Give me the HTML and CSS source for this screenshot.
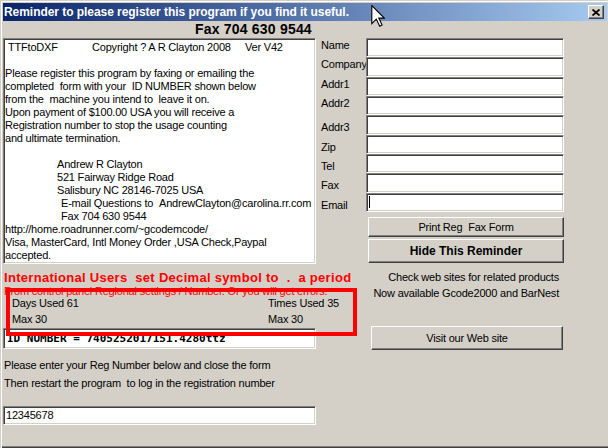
FILE: index.html
```html
<!DOCTYPE html>
<html>
<head>
<meta charset="utf-8">
<link rel="stylesheet" href="styles.css">
</head>
<body>
<div class="window">
  <div class="titlebar">
    <span class="title">Reminder to please register this program if you find it useful.</span>
    <span class="close"><svg width="8" height="7" viewBox="0 0 8 7"><path d="M0.5 0.5 L7.5 6.5 M7.5 0.5 L0.5 6.5" stroke="#000" stroke-width="1.8" fill="none"/></svg></span>
  </div>
  <div class="content">
    <div class="faxline">Fax 704 630 9544</div>
    <div class="main">
      <div class="left">
        <div class="memo">
          <div class="line"><span class="c1">TTFtoDXF</span><span class="c2">Copyright ? A R Clayton 2008</span><span>Ver V42</span></div>
          <div class="line"> </div>
          <div class="line">Please register this program by faxing or emailing the</div>
          <div class="line">completed  form with your  ID NUMBER shown below</div>
          <div class="line">from the  machine you intend to  leave it on.</div>
          <div class="line">Upon payment of $100.00 USA you will receive a</div>
          <div class="line">Registration number to stop the usage counting</div>
          <div class="line">and ultimate termination.</div>
          <div class="line"> </div>
          <div class="line ind1">Andrew R Clayton</div>
          <div class="line ind1">521 Fairway Ridge Road</div>
          <div class="line ind1">Salisbury NC 28146-7025 USA</div>
          <div class="line ind2"><span class="c3">E-mail Questions to</span>AndrewClayton@carolina.rr.com</div>
          <div class="line ind2">Fax 704 630 9544</div>
          <div class="line">http://home.roadrunner.com/~gcodemcode/</div>
          <div class="line">Visa, MasterCard, Intl Money Order ,USA Check,Paypal</div>
          <div class="line">accepted.</div>
        </div>
        <div class="warn">International Users  set Decimal symbol to  .  a period</div>
        <div class="warn-sub">From control panel Regional settings / Number. Or you will get errors.</div>
        <div class="stats">
          <span>Days Used 61</span><span>Times Used 35</span>
          <span>Max 30</span><span>Max 30</span>
        </div>
        <div class="idbox">ID NUMBER = 7405252017151.4280ttz</div>
        <p class="note">Please enter your Reg Number below and close the form</p>
        <p class="note">Then restart the program  to log in the registration number</p>
        <div class="field reg">12345678</div>
      </div>
      <div class="right">
        <div class="form">
          <span class="lbl">Name</span><span class="field"></span>
          <span class="lbl">Company</span><span class="field"></span>
          <span class="lbl">Addr1</span><span class="field"></span>
          <span class="lbl">Addr2</span><span class="field"></span>
          <span class="lbl low">Addr3</span><span class="field"></span>
          <span class="lbl low">Zip</span><span class="field"></span>
          <span class="lbl low">Tel</span><span class="field"></span>
          <span class="lbl low">Fax</span><span class="field"></span>
          <span class="lbl low">Email</span><span class="field"><span class="caret"></span></span>
        </div>
        <div class="btn print">Print Reg  Fax Form</div>
        <div class="btn hide">Hide This Reminder</div>
        <p class="promo">Check web sites for related products<br>Now available Gcode2000 and BarNest</p>
        <div class="btn visit">Visit our Web site</div>
      </div>
    </div>
  </div>
  <div class="annot"></div>
  <svg class="cursor" width="14" height="22" viewBox="0 0 12 19.5"><path d="M0.5 0.5 L0.5 16.5 L4.5 12.5 L7.5 18.8 L9.6 17.8 L6.7 11.6 L11.6 11.6 Z" fill="#fff" stroke="#000" stroke-width="1"/></svg>
</div>
</body>
</html>
```

FILE: styles.css
```css
body {
  margin: 0;
}

.window {
  position: relative;
  width: 608px;
  height: 448px;
  box-sizing: border-box;
  padding: 3px 0 2px 3px;
  overflow: hidden;
  background: #d4d0c8;
  font-family: "Liberation Sans", Arial, sans-serif;
  font-size: 11px;
  letter-spacing: -0.2px;
  color: #000;
  box-shadow: inset 1px 1px 0 #d4d0c8, inset 2px 2px 0 #fff, inset 0 -1px 0 #404040, inset 0 -2px 0 #808080;
}

.titlebar {
  height: 18px;
  margin-right: 1px;
  padding-left: 1px;
  display: flex;
  align-items: center;
  justify-content: space-between;
  background: linear-gradient(to right, #0a246a, #a6caf0);
}

.title {
  color: #fff;
  font-weight: bold;
  font-size: 12px;
  letter-spacing: -0.05px;
  white-space: nowrap;
}

.close {
  width: 16px;
  height: 14px;
  box-sizing: border-box;
  margin-right: 3px;
  background: #d4d0c8;
  border: 1px solid;
  border-color: #fff #404040 #404040 #fff;
  box-shadow: inset -1px -1px 0 #808080;
  display: flex;
  align-items: center;
  justify-content: center;
}

.close svg {
  display: block;
}

.faxline {
  height: 17px;
  line-height: 17px;
  padding-left: 192px;
  font-weight: bold;
  font-size: 14px;
  letter-spacing: 0.2px;
}

.main {
  display: grid;
  grid-template-columns: 313px 1fr;
  column-gap: 4px;
}

.memo {
  height: 226px;
  box-sizing: border-box;
  background: #fff;
  border: 1px solid;
  border-color: #808080 #fff #fff #808080;
  box-shadow: inset 1px 1px 0 #404040, inset -1px -1px 0 #d4d0c8;
  padding: 2px 0 0 1px;
}

.line {
  height: 13px;
  line-height: 13px;
  white-space: pre;
}

.c1 {
  display: inline-block;
  width: 84px;
  padding-left: 3px;
}

.c2 {
  display: inline-block;
  width: 153px;
}

.c3 {
  display: inline-block;
  width: 98px;
}

.ind1 {
  padding-left: 52px;
}

.ind2 {
  padding-left: 56px;
}

.warn {
  margin-top: 7px;
  height: 14px;
  line-height: 14px;
  padding-left: 1px;
  color: #ff0000;
  font-weight: bold;
  font-size: 13px;
  letter-spacing: 0.3px;
  white-space: pre;
}

.warn-sub {
  height: 12px;
  line-height: 12px;
  padding-left: 1px;
  color: #ff0000;
  white-space: nowrap;
}

.stats {
  display: grid;
  grid-template-columns: 256px max-content;
  grid-auto-rows: 12px;
  row-gap: 4px;
  line-height: 12px;
  padding-left: 9px;
  white-space: nowrap;
}

.idbox {
  margin-top: 3px;
  height: 21px;
  box-sizing: border-box;
  background: #fff;
  border: 1px solid;
  border-color: #808080 #fff #fff #808080;
  box-shadow: inset 1px 1px 0 #404040, inset -1px -1px 0 #d4d0c8;
  padding-left: 3px;
  line-height: 19px;
  font-family: "DejaVu Sans Mono", "Liberation Mono", monospace;
  font-weight: bold;
  font-size: 11px;
  letter-spacing: 0;
  white-space: nowrap;
}

.note {
  margin: 0;
  height: 18px;
  line-height: 18px;
  padding-left: 1px;
  white-space: pre;
}

.idbox + .note {
  margin-top: 7px;
}

.field {
  display: block;
  box-sizing: border-box;
  background: #fff;
  border: 1px solid;
  border-color: #808080 #fff #fff #808080;
  box-shadow: inset 1px 1px 0 #404040, inset -1px -1px 0 #d4d0c8;
}

.reg {
  margin-top: 14px;
  height: 19px;
  line-height: 17px;
  padding-left: 2px;
}

.form {
  display: grid;
  grid-template-columns: 46px 198px;
  grid-template-rows: repeat(9, 19.33px);
}

.lbl {
  padding-top: 1px;
  padding-left: 1px;
  line-height: 13px;
  white-space: nowrap;
}

.lbl.low {
  padding-top: 6px;
}

.caret {
  display: block;
  width: 1px;
  height: 12px;
  margin: 2px 0 0 2px;
  background: #000;
}

.btn {
  box-sizing: border-box;
  background: #d4d0c8;
  border: 1px solid;
  border-color: #fff #404040 #404040 #fff;
  box-shadow: inset -1px -1px 0 #808080;
  text-align: center;
  white-space: pre;
}

.print {
  margin: 5px 0 0 48px;
  width: 196px;
  height: 20px;
  line-height: 18px;
}

.hide {
  margin: 2px 0 0 48px;
  width: 196px;
  height: 24px;
  line-height: 22px;
  font-weight: bold;
  font-size: 12px;
  letter-spacing: 0;
}

.promo {
  margin: 6px 0 0 0;
  width: 239px;
  line-height: 16px;
  text-align: right;
}

.visit {
  margin: 25px 0 0 51px;
  width: 192px;
  height: 24px;
  line-height: 22px;
}

.annot {
  position: absolute;
  left: 6px;
  top: 288px;
  width: 351px;
  height: 48px;
  box-sizing: border-box;
  border: 4px solid #ff0000;
}

.cursor {
  position: absolute;
  left: 371px;
  top: 5px;
}
```
